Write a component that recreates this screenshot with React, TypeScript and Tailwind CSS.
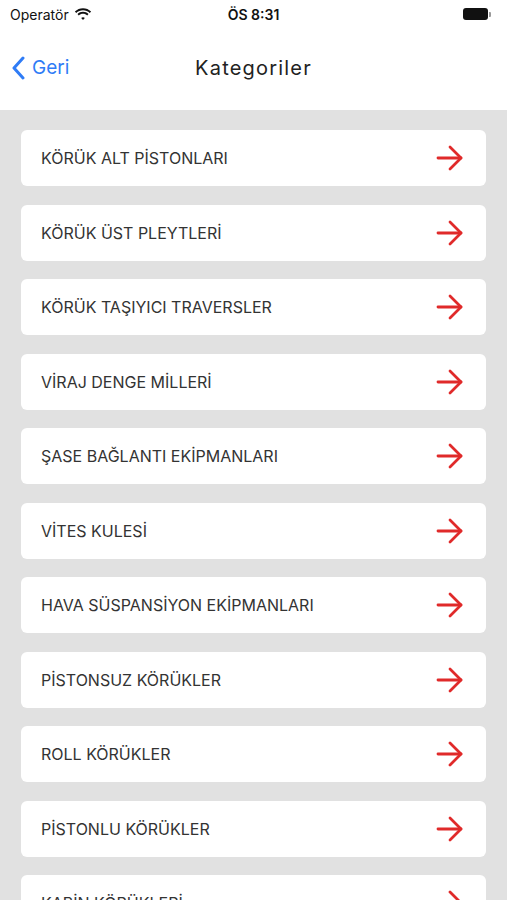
import React from 'react';

const categories = [
  'KÖRÜK ALT PİSTONLARI',
  'KÖRÜK ÜST PLEYTLERİ',
  'KÖRÜK TAŞIYICI TRAVERSLER',
  'VİRAJ DENGE MİLLERİ',
  'ŞASE BAĞLANTI EKİPMANLARI',
  'VİTES KULESİ',
  'HAVA SÜSPANSİYON EKİPMANLARI',
  'PİSTONSUZ KÖRÜKLER',
  'ROLL KÖRÜKLER',
  'PİSTONLU KÖRÜKLER',
  'KABİN KÖRÜKLERİ',
];

const RedArrow = () => (
  <svg width="28" height="26" viewBox="0 0 28 26" fill="none" stroke="#e02a2a" strokeWidth="2.8" strokeLinecap="round" strokeLinejoin="round">
    <path d="M2 13h23" />
    <path d="M14 2l11 11-11 11" />
  </svg>
);

const Wifi = () => (
  <svg width="18" height="13" viewBox="0 0 18 13" fill="#111">
    <path d="M9 2.2c2.6 0 5 1 6.8 2.7l1.3-1.4C14.9 1.4 12.1.2 9 .2S3.1 1.4.9 3.5l1.3 1.4C4 3.2 6.4 2.2 9 2.2z" />
    <path d="M9 5.8c1.6 0 3.1.6 4.2 1.6l1.3-1.4C13 4.6 11.1 3.8 9 3.8S5 4.6 3.5 6l1.3 1.4C5.9 6.4 7.4 5.8 9 5.8z" />
    <path d="M9 9.2c.7 0 1.3.3 1.8.7L9 12 7.2 9.9c.5-.4 1.1-.7 1.8-.7z" />
  </svg>
);

export default function App() {
  return (
    <div className="w-[507px] h-[900px] overflow-hidden bg-[#e1e1e1]" style={{ fontFamily: 'Inter, "Noto Sans", sans-serif' }}>
      {/* header */}
      <div className="bg-white h-[110px]">
        <div className="h-[28px] flex items-center justify-between px-[10px] relative text-[14px] text-[#111]">
          <div className="flex items-center gap-[5px]">
            <span>Operatör</span>
            <Wifi />
          </div>
          <span className="absolute left-1/2 -translate-x-1/2 font-semibold">ÖS 8:31</span>
          <div className="flex items-center pr-[6px]">
            <div className="w-[25px] h-[12px] rounded-[3px] bg-[#111]" />
            <div className="w-[2px] h-[5px] bg-[#999] rounded-r-[1px] ml-[1px]" />
          </div>
        </div>
        <div className="h-[80px] flex items-center relative">
          <div className="flex items-center pl-[12px] text-[#2f7cf6] text-[19px]">
            <svg width="14" height="24" viewBox="0 0 14 24" fill="none" stroke="#2f7cf6" strokeWidth="3" strokeLinecap="round" strokeLinejoin="round">
              <path d="M11 2L2 12l9 10" />
            </svg>
            <span className="ml-[6px]">Geri</span>
          </div>
          <span className="absolute left-1/2 -translate-x-1/2 text-[20px] tracking-[1.2px] text-[#222]">Kategoriler</span>
        </div>
      </div>

      {/* list */}
      <div className="flex flex-col gap-[18.5px] px-[21px] pt-[20px]">
        {categories.map((c) => (
          <div key={c} className="h-[56px] shrink-0 bg-white rounded-[6px] flex items-center justify-between pl-[20px] pr-[22px]">
            <span className="text-[16px] text-[#333]">{c}</span>
            <RedArrow />
          </div>
        ))}
      </div>
    </div>
  );
}
